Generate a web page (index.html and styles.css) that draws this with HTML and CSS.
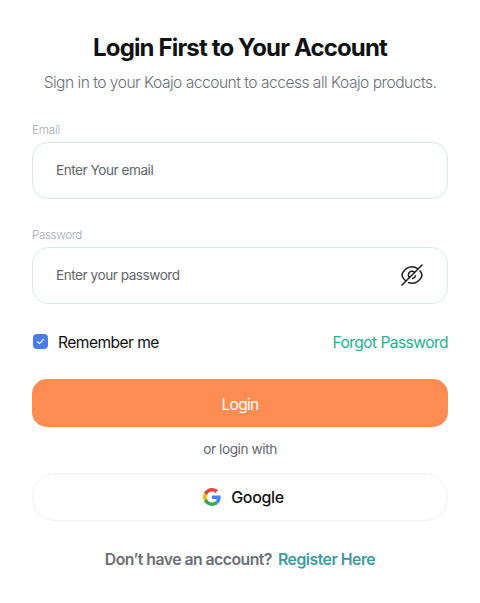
FILE: index.html
```html
<!DOCTYPE html>
<html lang="en"><head><meta charset="utf-8"><title>Login</title><link rel="stylesheet" href="styles.css"></head>
<body>
<main class="page">
<header class="header"><h1 class="title">Login First to Your Account</h1>
<p class="subtitle">Sign in to your Koajo account to access all Koajo products.</p></header>
<form class="form">
<div class="field"><label class="label email-label">Email</label><div class="input"><span class="ph-email">Enter Your email</span></div></div>
<div class="field"><label class="label pass-label">Password</label><div class="input"><span class="ph-pass">Enter your password</span>
<svg class="eye" viewBox="0 0 24 24" fill="none" stroke="#1d1d1d" stroke-width="1.5" stroke-linecap="round" stroke-linejoin="round"><path d="M14.53 9.47l-5.06 5.06a3.58 3.58 0 1 1 5.06-5.06z"/><path d="M17.82 5.77C16.07 4.45 14.07 3.73 12 3.73c-3.53 0-6.82 2.08-9.11 5.68-.9 1.41-.9 3.78 0 5.19.79 1.24 1.71 2.31 2.71 3.17M8.42 19.53c1.14.48 2.35.74 3.58.74 3.53 0 6.82-2.08 9.11-5.68.9-1.41.9-3.78 0-5.19-.33-.52-.69-1.01-1.06-1.47M15.51 12.7a3.56 3.56 0 0 1-2.82 2.82M9.47 14.53L2 22M22 2l-7.47 7.47"/></svg></div></div>
<div class="options"><div class="remember"><span class="check"><svg viewBox="0 0 16 16" fill="none" stroke="#fff" stroke-width="1.2" stroke-linecap="round" stroke-linejoin="round"><path d="M4.7 8.2l2.2 2.1 4.3-4.5"/></svg></span><span class="remember-text">Remember me</span></div><a class="forgot">Forgot Password</a></div>
<div class="login"><span>Login</span></div>
<p class="or"><span>or login with</span></p>
<div class="google"><svg class="g" viewBox="0 0 48 48"><path fill="#EA4335" d="M24 9.5c3.54 0 6.71 1.22 9.21 3.6l6.85-6.85C35.9 2.38 30.47 0 24 0 14.62 0 6.51 5.38 2.56 13.22l7.98 6.19C12.43 13.72 17.74 9.5 24 9.5z"/><path fill="#4285F4" d="M46.98 24.55c0-1.57-.15-3.09-.38-4.55H24v9.02h12.94c-.58 2.96-2.26 5.48-4.78 7.18l7.73 6c4.51-4.18 7.09-10.36 7.09-17.65z"/><path fill="#FBBC05" d="M10.53 28.59A14.5 14.5 0 0 1 9.77 24c0-1.6.27-3.14.76-4.59l-7.98-6.19A23.9 23.9 0 0 0 0 24c0 3.88.92 7.54 2.56 10.78z"/><path fill="#34A853" d="M24 48c6.48 0 11.93-2.13 15.89-5.81l-7.73-6C30.01 37.64 27.24 38.5 24 38.5c-6.26 0-11.57-4.22-13.47-9.91l-7.98 6.19C6.51 42.62 14.62 48 24 48z"/></svg><span>Google</span></div>
</form>
<footer class="footer"><span class="question">Don’t have an account?</span><a class="register">Register Here</a></footer>
</main></body></html>
```
FILE: styles.css
```css
*{box-sizing:border-box}
body{margin:0;background:#fff;font-family:Inter,"Liberation Sans",sans-serif;color:#111214}
.page{padding:32px;display:flex;flex-direction:column}
.header{text-align:center;white-space:nowrap}
.title{margin:0;font-size:24px;line-height:32px;font-weight:700;letter-spacing:-.85px}
.subtitle{margin:7px 0 0;font-size:15.6px;line-height:24px;font-weight:350;color:#6b6e76;letter-spacing:-.51px}
.form{display:flex;flex-direction:column}
.field{margin-top:28px;display:flex;flex-direction:column}
.field:first-child{margin-top:27px}
.label{font-size:11.7px;line-height:16px;height:20px;font-weight:350;color:#a3acb5}
.email-label{letter-spacing:-.2px}
.pass-label{letter-spacing:-.4px}
.input{height:57px;border:1px solid #dfe7ea;border-radius:16px;padding:0 23px 1px;display:flex;align-items:center;justify-content:space-between;font-size:13.6px;font-weight:370;color:#63666e;letter-spacing:-.47px}
.eye{width:24px;height:24px}
.options{margin-top:26px;height:24px;display:flex;align-items:center;justify-content:space-between;font-size:15.6px;letter-spacing:-.55px}
.remember{display:flex;align-items:center;gap:9px}
.check{width:15px;height:15px;margin:0 1px 1px 1.4px;border-radius:4px;background:#4a7de8;display:flex}
.check svg{width:15px;height:15px}
.remember-text{margin-left:-.4px}
.forgot{color:#26af91;font-weight:370;letter-spacing:-.57px}
.login{margin-top:25px;height:48px;padding-top:2px;border-radius:15px;background:#ff8c52;color:#fff;display:flex;align-items:center;justify-content:center;font-size:15.6px;letter-spacing:-.7px}
.or{margin:12px 0 13px;height:21px;line-height:21px;text-align:center;font-size:13.6px;font-weight:370;color:#63666e;letter-spacing:-.4px}
.google{height:48px;padding-left:7px;border:1px solid #f0f1f2;border-radius:24px;display:flex;align-items:center;justify-content:center;gap:10px;font-size:16px;font-weight:500;letter-spacing:-.35px}
.g{width:18px;height:18px}
.footer{margin-top:27px;display:flex;justify-content:center;gap:6px;font-size:15.8px;line-height:24px;font-weight:600;letter-spacing:-.53px;color:#6b6e76}
.register{color:#3f9a9d;letter-spacing:-.48px}
```
